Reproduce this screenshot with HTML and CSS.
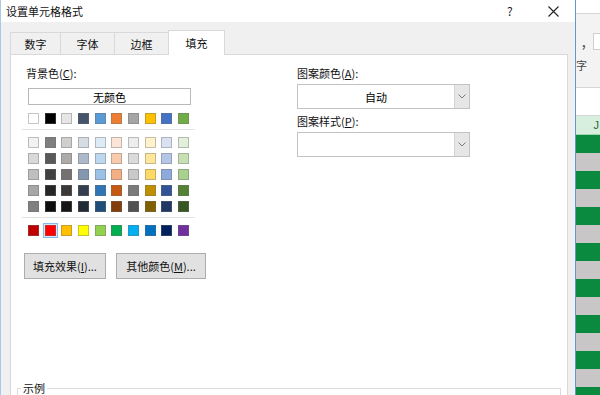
FILE: index.html
```html
<!DOCTYPE html>
<html lang="zh">
<head>
<meta charset="utf-8">
<title>设置单元格格式</title>
<link rel="stylesheet" href="styles.css">
</head>
<body>
<div class="dialog">
  <div class="titlebar">
    <span class="title">设置单元格格式</span>
    <span class="help">?</span>
    <span class="close"><svg width="11" height="11" viewBox="0 0 11 11"><path d="M0.5 0.5L10.5 10.5M10.5 0.5L0.5 10.5" stroke="#222" stroke-width="1.1" fill="none"/></svg></span>
  </div>
  <div class="dlg-body">
    <div class="tabs">
      <div class="tab t1">数字</div>
      <div class="tab">字体</div>
      <div class="tab">边框</div>
      <div class="tab active">填充</div>
    </div>
    <div class="panel">
      <div class="cols">
        <div class="left">
          <div class="label">背景色(<u>C</u>):</div>
          <div class="nocolor">无颜色</div>
          <div class="swatches">
            <i class="sw" style="background:#ffffff"></i><i class="sw" style="background:#000000"></i><i class="sw" style="background:#e7e6e6"></i><i class="sw" style="background:#44546a"></i><i class="sw" style="background:#5b9bd5"></i><i class="sw" style="background:#ed7d31"></i><i class="sw" style="background:#a5a5a5"></i><i class="sw" style="background:#ffc000"></i><i class="sw" style="background:#4472c4"></i><i class="sw" style="background:#70ad47"></i>
          </div>
          <div class="sep"></div>
          <div class="swatches theme">
            <i class="sw" style="background:#f2f2f2"></i><i class="sw" style="background:#7f7f7f"></i><i class="sw" style="background:#d0cece"></i><i class="sw" style="background:#d6dce4"></i><i class="sw" style="background:#ddebf7"></i><i class="sw" style="background:#fce4d6"></i><i class="sw" style="background:#ededed"></i><i class="sw" style="background:#fff2cc"></i><i class="sw" style="background:#d9e1f2"></i><i class="sw" style="background:#e2efda"></i>
            <i class="sw" style="background:#d9d9d9"></i><i class="sw" style="background:#595959"></i><i class="sw" style="background:#aeaaaa"></i><i class="sw" style="background:#adb9ca"></i><i class="sw" style="background:#bdd7ee"></i><i class="sw" style="background:#f8cbad"></i><i class="sw" style="background:#dbdbdb"></i><i class="sw" style="background:#ffe699"></i><i class="sw" style="background:#b4c6e7"></i><i class="sw" style="background:#c6e0b4"></i>
            <i class="sw" style="background:#bfbfbf"></i><i class="sw" style="background:#404040"></i><i class="sw" style="background:#757171"></i><i class="sw" style="background:#8497b0"></i><i class="sw" style="background:#9bc2e6"></i><i class="sw" style="background:#f4b084"></i><i class="sw" style="background:#c9c9c9"></i><i class="sw" style="background:#ffd966"></i><i class="sw" style="background:#8ea9db"></i><i class="sw" style="background:#a9d08e"></i>
            <i class="sw" style="background:#a6a6a6"></i><i class="sw" style="background:#262626"></i><i class="sw" style="background:#3a3838"></i><i class="sw" style="background:#333f4f"></i><i class="sw" style="background:#2f75b5"></i><i class="sw" style="background:#c65911"></i><i class="sw" style="background:#7b7b7b"></i><i class="sw" style="background:#bf8f00"></i><i class="sw" style="background:#305496"></i><i class="sw" style="background:#548235"></i>
            <i class="sw" style="background:#808080"></i><i class="sw" style="background:#0d0d0d"></i><i class="sw" style="background:#171616"></i><i class="sw" style="background:#222b35"></i><i class="sw" style="background:#1f4e78"></i><i class="sw" style="background:#833c0c"></i><i class="sw" style="background:#525252"></i><i class="sw" style="background:#806000"></i><i class="sw" style="background:#203764"></i><i class="sw" style="background:#375623"></i>
          </div>
          <div class="sep"></div>
          <div class="swatches">
            <i class="sw" style="background:#c00000"></i><i class="sw selected" style="background:#ff0000"></i><i class="sw" style="background:#ffc000"></i><i class="sw" style="background:#ffff00"></i><i class="sw" style="background:#92d050"></i><i class="sw" style="background:#00b050"></i><i class="sw" style="background:#00b0f0"></i><i class="sw" style="background:#0070c0"></i><i class="sw" style="background:#002060"></i><i class="sw" style="background:#7030a0"></i>
          </div>
          <div class="btns">
            <div class="btn b1">填充效果(<u>I</u>)...</div>
            <div class="btn b2">其他颜色(<u>M</u>)...</div>
          </div>
        </div>
        <div class="right">
          <div class="label">图案颜色(<u>A</u>):</div>
          <div class="combo">
            <span class="combo-text">自动</span>
            <span class="combo-btn"><svg width="8" height="5" viewBox="0 0 8 5"><path d="M0.5 0.5L4 4L7.5 0.5" stroke="#7a7a7a" stroke-width="1" fill="none"/></svg></span>
          </div>
          <div class="label l2">图案样式(<u>P</u>):</div>
          <div class="combo">
            <span class="combo-text"></span>
            <span class="combo-btn"><svg width="8" height="5" viewBox="0 0 8 5"><path d="M0.5 0.5L4 4L7.5 0.5" stroke="#7a7a7a" stroke-width="1" fill="none"/></svg></span>
          </div>
        </div>
      </div>
      <fieldset class="sample"><legend>示例</legend></fieldset>
    </div>
  </div>
</div>
<div class="excel">
  <div class="x-top"></div>
  <div class="x-ribbon">
    <div class="x-row"><span class="x-comma">,</span><span class="x-box"></span></div>
    <div class="x-zi">字</div>
  </div>
  <div class="x-formula"></div>
  <div class="x-header">J</div>
  <div class="x-stripes"></div>
</div>
</body>
</html>
```

FILE: styles.css
```css
* { box-sizing: border-box; margin: 0; padding: 0; }
html, body { width: 600px; height: 395px; overflow: hidden; background: #fff; }
body {
  font-family: "Noto Sans CJK SC", "Noto Sans", sans-serif;
  font-size: 11px;
  color: #000;
  display: flex;
}
u { text-decoration: underline; text-underline-offset: 1px; }

.dialog {
  width: 576px;
  height: 395px;
  flex: none;
  border-left: 1px solid #a9c9ea;
  border-right: 1px solid #5e98d3;
  display: flex;
  flex-direction: column;
  background: #f0f0f0;
}
.titlebar {
  height: 22px;
  flex: none;
  background: #fff;
  display: flex;
  align-items: center;
  padding-left: 5px;
  padding-right: 16px;
}
.title { flex: 1; line-height: 14px; color: #111; }
.help { font-size: 12px; line-height: 14px; width: 8px; margin-right: 33px; color: #222; }
.close svg { display: block; }

.dlg-body {
  flex: 1;
  padding: 8px 7px 0 9px;
  display: flex;
  flex-direction: column;
}
.tabs { height: 24px; display: flex; align-items: flex-end; flex: none; }
.tab {
  width: 55px;
  height: 22px;
  margin-left: -1px;
  border: 1px solid #d9d9d9;
  border-bottom: none;
  background: #f0f0f0;
  display: flex;
  align-items: center;
  justify-content: center;
  line-height: 14px;
  color: #111;
}
.tab.t1 { width: 51px; margin-left: 0; }
.tab.active {
  width: 57px;
  height: 25px;
  margin-bottom: -1px;
  background: #fff;
  position: relative;
  z-index: 1;
  padding-bottom: 1px;
}
.panel {
  flex: 1;
  background: #fff;
  border: 1px solid #d9d9d9;
  padding-top: 11px;
}
.cols { display: flex; padding-left: 15px; }
.left { width: 171px; flex: none; display: flex; flex-direction: column; }
.right { width: 173px; flex: none; margin-left: 100px; display: flex; flex-direction: column; }
.label { line-height: 14px; height: 14px; color: #111; }

.nocolor {
  margin: 8px 0 0 2px;
  width: 163px;
  height: 17px;
  border: 1px solid #b9b9b9;
  display: flex;
  align-items: center;
  justify-content: center;
  line-height: 14px;
}
.swatches {
  margin: 8px 0 0 2px;
  width: 161px;
  display: grid;
  grid-template-columns: repeat(10, 11px);
  justify-content: space-between;
  row-gap: 5px;
}
.sep + .swatches { margin-top: 7px; }
.sw {
  display: block;
  width: 11px;
  height: 11px;
  border: 1px solid rgba(110, 110, 110, 0.4);
}
.sw.selected {
  outline: 1px solid #86bbec;
  outline-offset: 1px;
  box-shadow: 0 0 0 2px #d6e9fa;
}
.sep {
  margin: 5px 0 0 -4px;
  width: 173px;
  height: 1px;
  background: #e3e3e3;
}
.btns { display: flex; gap: 10px; margin: 17px 0 0 -2px; }
.btn {
  flex: none;
  height: 26px;
  border: 1px solid #adadad;
  background: #e1e1e1;
  display: flex;
  align-items: center;
  justify-content: center;
  line-height: 14px;
  color: #111;
}
.btn.b1 { width: 82px; }
.btn.b2 { width: 90px; }

.combo {
  margin-top: 4px;
  height: 25px;
  border: 1px solid #c3c3c3;
  display: flex;
}
.combo-text { flex: 1; display: flex; align-items: center; justify-content: center; line-height: 14px; }
.combo-btn {
  width: 15px;
  background: #e6e6e6;
  border-left: 1px solid #d4d4d4;
  display: flex;
  align-items: center;
  justify-content: center;
}
.combo-btn svg { display: block; }
.label.l2 { margin-top: 5px; }

.sample {
  margin: 102px 6px 0 6px;
  height: 40px;
  border: 1px solid #dcdcdc;
  padding: 0 0 0 3px;
}
.sample legend { padding: 0 2px; line-height: 14px; color: #111; }

.excel {
  width: 24px;
  height: 395px;
  flex: none;
  display: flex;
  flex-direction: column;
  background: #fff;
  overflow: hidden;
}
.x-top { height: 14px; border-bottom: 1px solid #d6d6d6; flex: none; }
.x-ribbon { height: 74px; background: #f3f3f3; border-bottom: 1px solid #d6d6d6; flex: none; padding-top: 19px; }
.x-row { display: flex; height: 17px; align-items: center; }
.x-comma { width: 18px; padding-left: 6px; line-height: 14px; font-weight: bold; color: #555; }
.x-box { width: 8px; height: 17px; border: 1px solid #cfcfcf; border-right: none; background: #fff; }
.x-zi { margin-top: 8px; line-height: 14px; color: #444; }
.x-formula { height: 28px; border-bottom: 1px solid #d4d4d4; flex: none; }
.x-header {
  height: 19px;
  flex: none;
  background: #d7efdf;
  border-bottom: 1px solid #9fd5b1;
  text-align: right;
  padding-right: 1px;
  line-height: 18px;
  font-family: "Liberation Sans", sans-serif;
  font-size: 11px;
  color: #1e6a3c;
}
.x-stripes {
  flex: 1;
  background: repeating-linear-gradient(to bottom, #0a8a3f 0, #0a8a3f 18px, #c8c6c6 18px, #c8c6c6 36px);
}
```
